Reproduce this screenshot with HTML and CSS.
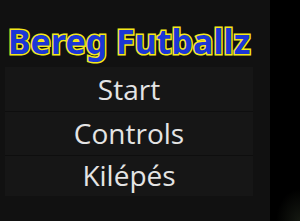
FILE: index.html
```html
<!DOCTYPE html>
<html>
<head>
<meta charset="utf-8">
<link rel="stylesheet" href="styles.css">
</head>
<body>
<div class="screen">
  <div class="panel">
    <h1 class="title">Bereg Futballz</h1>
    <div class="menu">
      <div class="item">Start</div>
      <div class="item">Controls</div>
      <div class="item">Kilépés</div>
    </div>
  </div>
  <div class="side"></div>
</div>
</body>
</html>
```
FILE: styles.css
```css
html, body {
  margin: 0;
  padding: 0;
  background: #000;
}
.screen {
  display: flex;
  width: 300px;
  height: 221px;
  overflow: hidden;
}
.panel {
  width: 270px;
  height: 221px;
  background: #111111;
  display: flex;
  flex-direction: column;
}
.title {
  margin: 0;
  padding: 20px 0 0 8px;
  font-family: "Noto Sans", sans-serif;
  font-weight: 700;
  font-size: 34px;
  line-height: 42px;
  color: #1b36d6;
  -webkit-text-stroke: 3px #f4e81c;
  paint-order: stroke fill;
  white-space: nowrap;
}
.menu {
  margin: 5px 17px 0 5px;
  display: flex;
  flex-direction: column;
  background: #161616;
}
.item {
  box-sizing: border-box;
  height: 44px;
  padding-bottom: 2px;
  display: flex;
  align-items: center;
  justify-content: center;
  font-family: "Open Sans", sans-serif;
  font-size: 28px;
  color: #e4e4e4;
  border-bottom: 1px solid #0e0e0e;
}
.item:first-child {
  height: 45px;
  padding-bottom: 0;
}
.item:last-child {
  border-bottom: none;
  height: 40px;
}
.side {
  flex: 1;
  background:
    radial-gradient(ellipse 30px 40px at 100% 100%, rgba(60,70,50,0.35), rgba(0,0,0,0) 80%),
    #000;
}
```
